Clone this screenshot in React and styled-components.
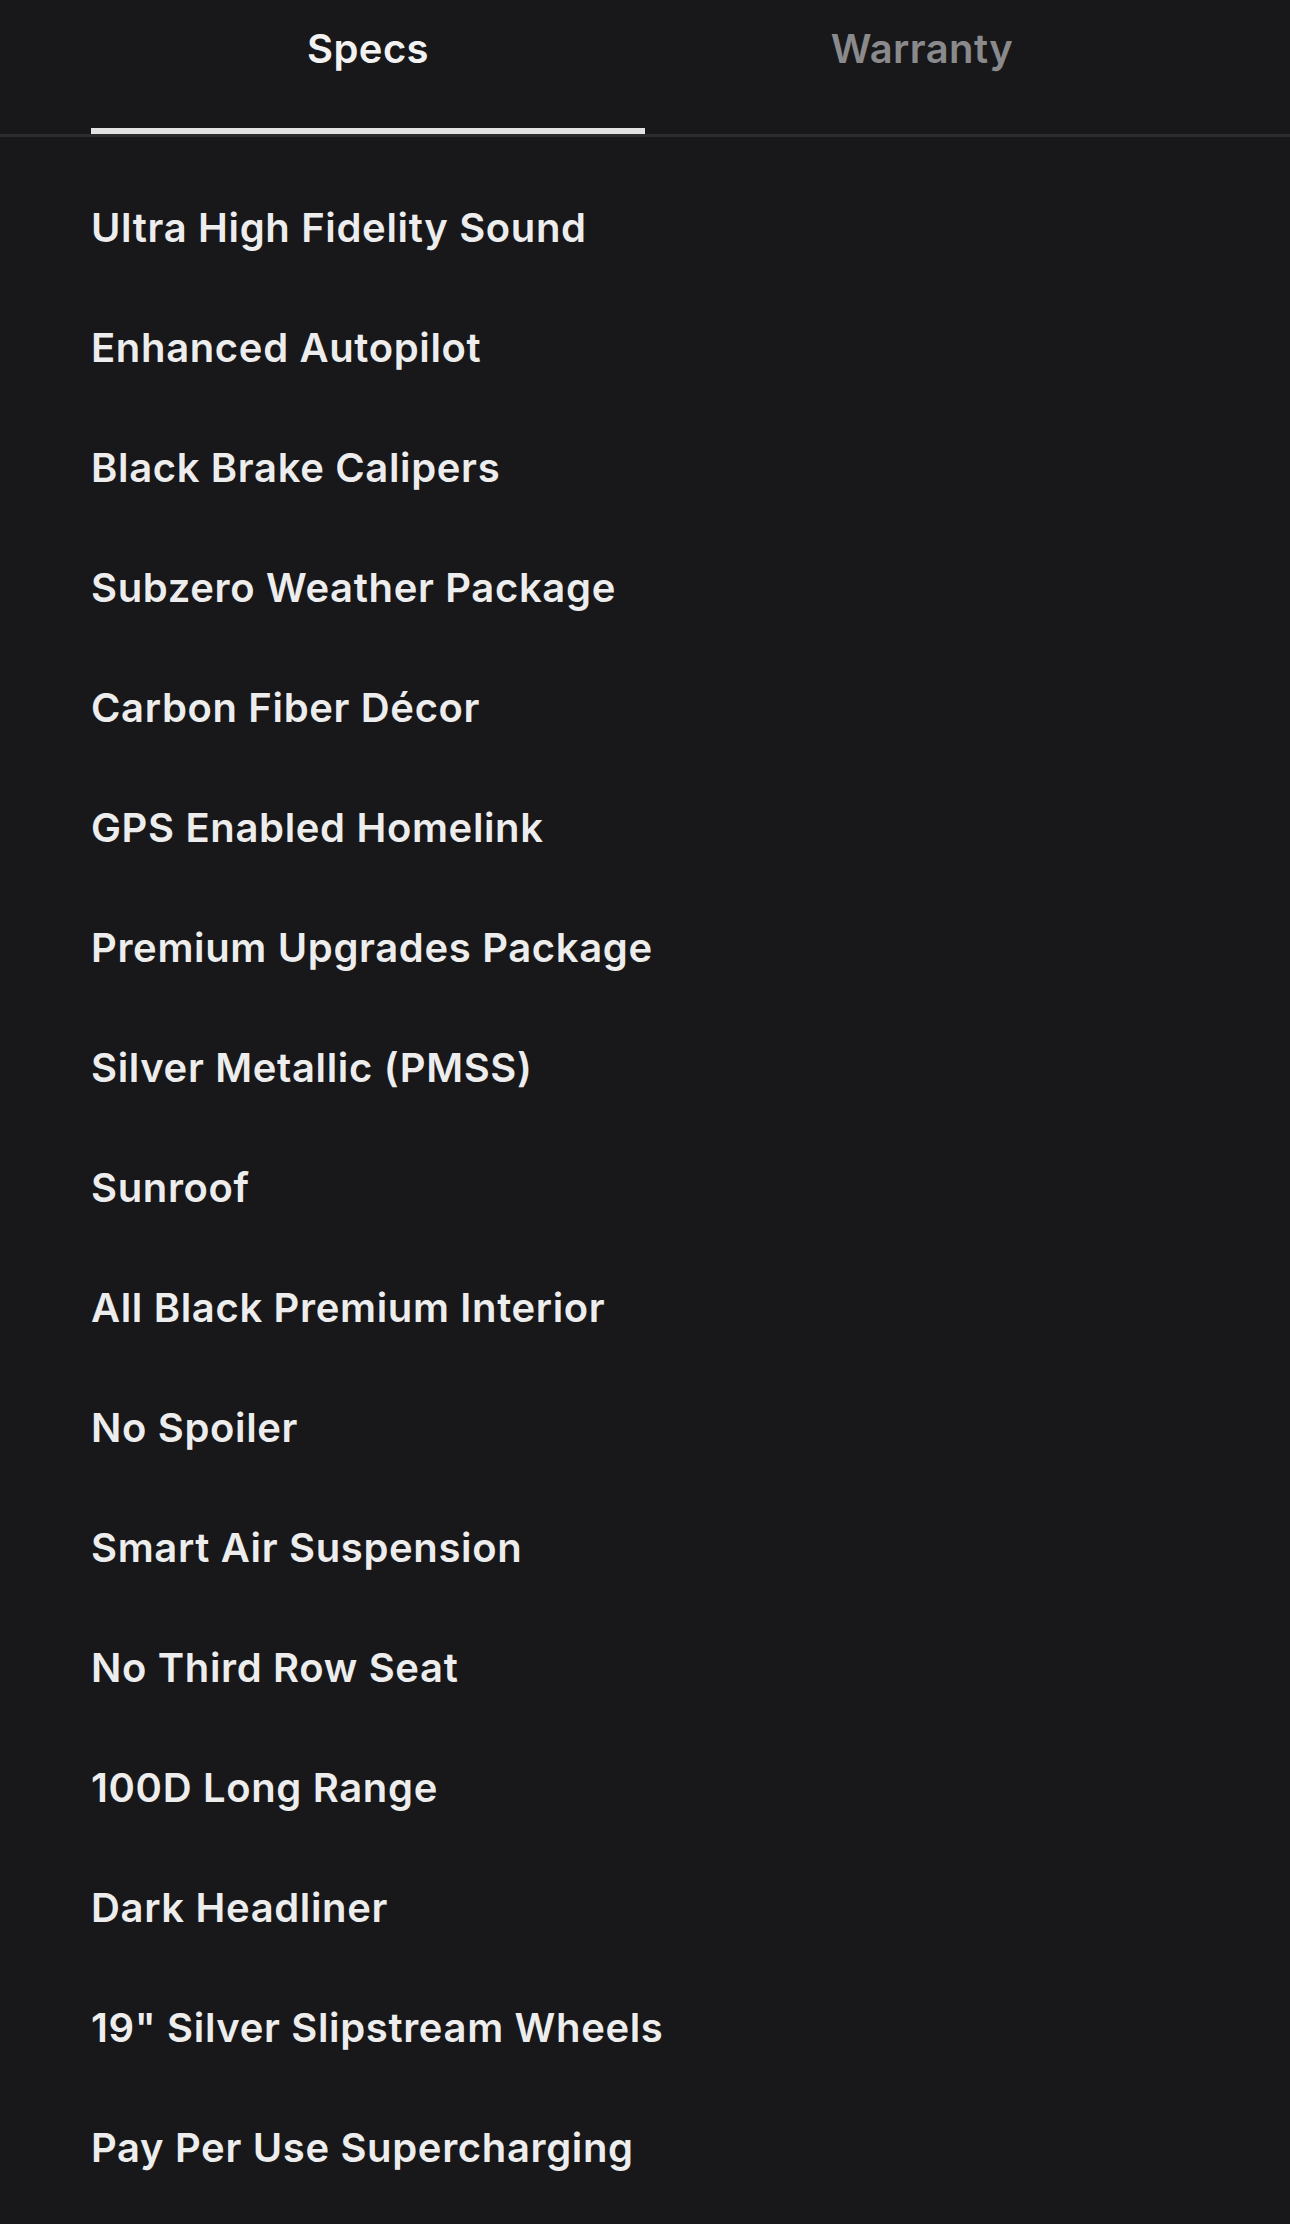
import React from 'react'
import styled, { createGlobalStyle } from 'styled-components'

const GlobalStyle = createGlobalStyle`
  html, body {
    margin: 0;
    padding: 0;
    background-color: #18181a;
  }
  body {
    font-family: "Inter", "Noto Sans", sans-serif;
    -webkit-font-smoothing: antialiased;
  }
`

const specs = [
  'Ultra High Fidelity Sound',
  'Enhanced Autopilot',
  'Black Brake Calipers',
  'Subzero Weather Package',
  'Carbon Fiber Décor',
  'GPS Enabled Homelink',
  'Premium Upgrades Package',
  'Silver Metallic (PMSS)',
  'Sunroof',
  'All Black Premium Interior',
  'No Spoiler',
  'Smart Air Suspension',
  'No Third Row Seat',
  '100D Long Range',
  'Dark Headliner',
  '19" Silver Slipstream Wheels',
  'Pay Per Use Supercharging',
]

const App = () => {
  return (
    <Page>
      <GlobalStyle />
      <TabBar>
        <Tab active>Specs</Tab>
        <Tab>Warranty</Tab>
      </TabBar>
      <SpecList>
        {specs.map((s) => (
          <SpecItem key={s}>{s}</SpecItem>
        ))}
      </SpecList>
    </Page>
  )
}

export default App

const Page = styled.div`
  width: 100%;
  min-height: 2224px;
  background-color: #18181a;
`

const TabBar = styled.div`
  display: grid;
  grid-template-columns: 1fr 1fr;
  padding: 0 91px;
  border-bottom: 3px solid #2c2c2f;
`

const Tab = styled.div`
  height: 134px;
  box-sizing: border-box;
  padding-top: 23px;
  text-align: center;
  font-size: 40px;
  font-weight: 600;
  letter-spacing: 0.4px;
  line-height: 52px;
  color: ${(p) => (p.active ? '#f2f2f2' : '#8a8a8c')};
  border-bottom: 6px solid ${(p) => (p.active ? '#e2e2e2' : 'transparent')};
`

const SpecList = styled.div`
  display: flex;
  flex-direction: column;
  padding: 65px 91px 0;
`

const SpecItem = styled.div`
  height: 120px;
  font-size: 40px;
  font-weight: 600;
  letter-spacing: 0.65px;
  line-height: 52px;
  color: #ededed;
`
